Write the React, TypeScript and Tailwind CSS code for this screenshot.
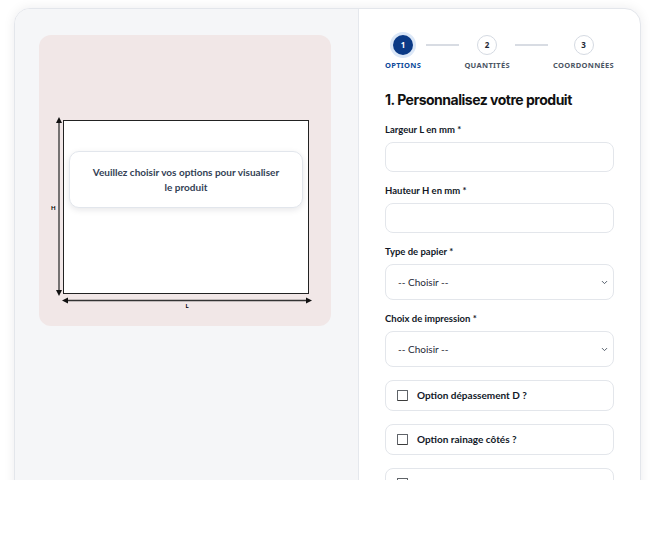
import React from 'react';
import { ChevronDown } from 'lucide-react';

const steps = [
  { n: 1, label: 'Options', active: true },
  { n: 2, label: 'Quantités', active: false },
  { n: 3, label: 'Coordonnées', active: false },
];

const Stepper: React.FC = () => (
  <div className="flex items-start" style={{ fontFamily: '"Noto Sans", sans-serif' }}>
    {steps.map((s, i) => (
      <React.Fragment key={s.n}>
        {i > 0 && <div className="flex-1 h-[2px] bg-[#d8dce3] mx-[5px] mt-[9px]" />}
        <div className="flex flex-col items-center">
          <div
            className={
              s.active
                ? 'w-[20px] h-[20px] rounded-full bg-[#0b3a86] ring-[3px] ring-[#dbe7f7] text-white flex items-center justify-center text-[8px] font-bold'
                : 'w-[20px] h-[20px] rounded-full bg-white border border-[#d5dae2] text-[#1f2937] flex items-center justify-center text-[8px] font-bold'
            }
          >
            {s.n}
          </div>
          <span
            className={`mt-[5px] text-[7.5px] font-bold uppercase tracking-[0.04em] leading-[10px] ${
              s.active ? 'text-[#0b4a9a]' : 'text-[#4b5563]'
            }`}
          >
            {s.label}
          </span>
        </div>
      </React.Fragment>
    ))}
  </div>
);

const Field: React.FC<{ label: string; select?: boolean }> = ({ label, select }) => (
  <div className="flex flex-col">
    <label className="text-[9.5px] font-bold text-[#111827] leading-[12px] mb-[6px]">{label}</label>
    {select ? (
      <div className="relative">
        <div className="h-[36px] rounded-lg border border-[#e3e6eb] bg-white flex items-center pl-[12px] text-[10px] text-[#1f2937]">
          -- Choisir --
        </div>
        <ChevronDown className="absolute right-[5px] top-[14px] w-[9px] h-[9px] text-[#4b5563]" strokeWidth={2.5} />
      </div>
    ) : (
      <div className="h-[30px] rounded-lg border border-[#e3e6eb] bg-white" />
    )}
  </div>
);

const CheckOption: React.FC<{ label?: string }> = ({ label }) => (
  <div className="h-[31px] rounded-lg border border-[#e3e6eb] bg-white flex items-center pl-[11px] gap-[9px]">
    <span className="w-[11px] h-[11px] border border-[#5f6368] border-b-[#3c3c3c] rounded-[1px] bg-white" />
    {label && <span className="text-[10px] font-bold text-[#111827]">{label}</span>}
  </div>
);

const Preview: React.FC = () => (
  <div className="w-[292px] h-[291px] rounded-xl bg-[#f1e7e7] pt-[85px] pl-[12px]">
    <div className="flex items-stretch">
      <div className="flex items-center w-[4px]">
        <span className="text-[6px] font-bold text-black leading-none">H</span>
      </div>
      <svg width="8" height="179" viewBox="0 0 8 179" className="-mt-[3px]">
        <line x1="4" y1="4" x2="4" y2="175" stroke="#333" strokeWidth="1.3" />
        <polygon points="4,0 1,6 7,6" fill="#111" />
        <polygon points="4,179 1,173 7,173" fill="#111" />
      </svg>
      <div className="w-[246px] h-[174px] border-[1.5px] border-[#222] bg-white pt-[30px] px-[5px]">
        <div className="h-[57px] rounded-[10px] border border-[#e2e6ec] bg-white shadow-[0_2px_6px_rgba(15,23,42,0.10)] flex items-center justify-center text-center">
          <p className="text-[10px] font-bold text-[#334155] leading-[15px] whitespace-nowrap">
            Veuillez choisir vos options pour visualiser
            <br />
            le produit
          </p>
        </div>
      </div>
    </div>
    <div className="pl-[11px]">
      <svg width="250" height="9" viewBox="0 0 250 9">
        <line x1="4" y1="4.5" x2="246" y2="4.5" stroke="#333" strokeWidth="1.3" />
        <polygon points="0,4.5 6,1.5 6,7.5" fill="#111" />
        <polygon points="250,4.5 244,1.5 244,7.5" fill="#111" />
      </svg>
      <div className="w-[250px] text-center text-[6px] font-bold text-black leading-none -mt-[2px]">L</div>
    </div>
  </div>
);

export default function App() {
  return (
    <div className="h-[480px] overflow-hidden bg-white pt-2 pl-[14px] pr-[19px]" style={{ fontFamily: 'Lato, "Noto Sans", sans-serif' }}>
      <div className="flex h-[520px] rounded-t-2xl border border-[#e3e6eb] bg-white shadow-[0_0_12px_rgba(15,23,42,0.08)] overflow-hidden">
        <div className="w-[344px] bg-[#f5f6f8] border-r border-[#e5e8ed] pt-[26px] pl-[24px]">
          <Preview />
        </div>
        <div className="flex-1 pt-[26px] pl-[26px] pr-[26px]">
          <Stepper />
          <h1 className="mt-[20px] text-[14px] font-bold text-[#111] tracking-[-0.035em] leading-[20px]" style={{ fontFamily: 'Inter, sans-serif' }}>
            1. Personnalisez votre produit
          </h1>
          <div className="mt-[14px] flex flex-col gap-[13px]">
            <Field label="Largeur L en mm *" />
            <Field label="Hauteur H en mm *" />
            <Field label="Type de papier *" select />
            <Field label="Choix de impression *" select />
            <CheckOption label="Option dépassement D ?" />
            <CheckOption label="Option rainage côtés ?" />
            <CheckOption />
          </div>
        </div>
      </div>
    </div>
  );
}
